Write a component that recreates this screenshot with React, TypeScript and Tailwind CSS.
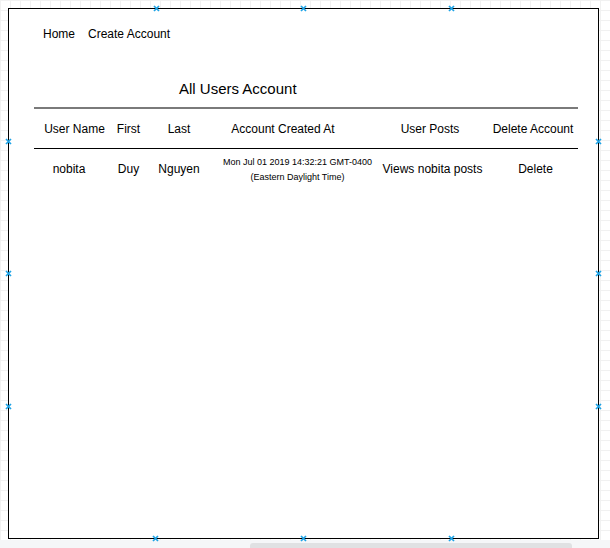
import React from "react";

const Marker = ({ x, y }: { x: number; y: number }) => (
  <svg
    className="absolute"
    style={{ left: x - 3, top: y - 3 }}
    width="7"
    height="7"
    viewBox="0 0 7 7"
  >
    <path d="M1 1 L6 6 M6 1 L1 6" stroke="#1ea3e6" strokeWidth="1.7" />
  </svg>
);

export default function App() {
  const markers = [
    { x: 148, y: 0 },
    { x: 295, y: 0 },
    { x: 443, y: 0 },
    { x: 0, y: 133 },
    { x: 0, y: 265 },
    { x: 0, y: 398 },
    { x: 590, y: 133 },
    { x: 590, y: 265 },
    { x: 590, y: 398 },
    { x: 147, y: 530 },
    { x: 295, y: 530 },
    { x: 443, y: 530 },
  ];
  return (
    <div className="w-[610px] h-[548px] flex flex-col overflow-hidden bg-white font-['Liberation_Sans',Arial,sans-serif] text-black">
      <div className="h-[540px] pl-[8px] pt-[8px] bg-white bg-[linear-gradient(to_right,#f1f1f1_1px,transparent_1px),linear-gradient(to_bottom,#f1f1f1_1px,transparent_1px)] bg-[size:10px_10px]">
        <div className="relative w-[591px] h-[531px] border border-black bg-white">
          <div className="pt-[18px] pl-[34px] flex gap-[13px] text-[12px] leading-[14px]">
            <span>Home</span>
            <span>Create Account</span>
          </div>
          <div className="mt-[40px] pl-[170px] text-[15px] leading-[16px]">
            All Users Account
          </div>
          <div className="mt-[10px] ml-[25px] w-[544px] border-t-2 border-[#7a7a7a]">
            <div className="grid grid-cols-[81px_27px_74px_156px_116px_90px] h-[40px] items-center border-b border-black text-[12px] leading-[14px] whitespace-nowrap text-center">
              <div className="flex justify-center">User Name</div>
              <div className="flex justify-center">First</div>
              <div className="flex justify-center">Last</div>
              <div className="flex justify-center pr-[22px]">Account Created At</div>
              <div className="flex justify-center">User Posts</div>
              <div className="flex justify-center">Delete Account</div>
            </div>
            <div className="grid grid-cols-[81px_27px_74px_156px_116px_90px] h-[39px] items-center text-[12px] leading-[14px] whitespace-nowrap text-center">
              <div className="flex justify-center pr-[11px]">nobita</div>
              <div className="flex justify-center">Duy</div>
              <div className="flex justify-center">Nguyen</div>
              <div className="flex flex-col items-center pl-[7px] pt-[2px] text-[9px] leading-[15px]">
                <span>Mon Jul 01 2019 14:32:21 GMT-0400</span>
                <span>(Eastern Daylight Time)</span>
              </div>
              <div className="flex justify-center pl-[5px]">Views nobita posts</div>
              <div className="flex justify-center pl-[5px]">Delete</div>
            </div>
          </div>
          <div className="absolute -left-[1px] -top-[1px] w-0 h-0">
            {markers.map((m, i) => (
              <Marker key={i} x={m.x} y={m.y} />
            ))}
          </div>
        </div>
      </div>
      <div className="h-[8px] bg-[#f5f6f8] pt-[3px]">
        <div className="ml-[250px] w-[322px] h-[5px] bg-[#e0e1e3] rounded-t-[3px]" />
      </div>
    </div>
  );
}
